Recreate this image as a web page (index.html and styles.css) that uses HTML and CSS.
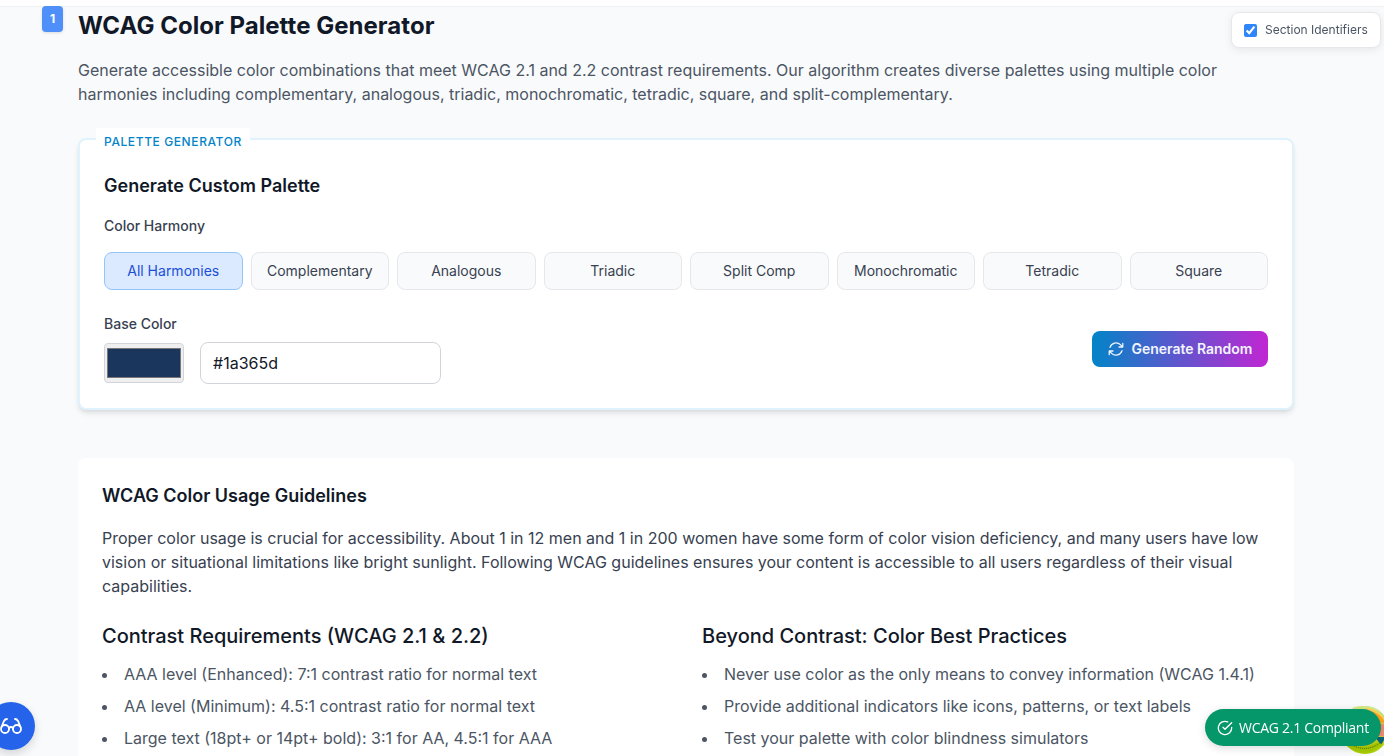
FILE: index.html
```html
<!DOCTYPE html>
<html lang="en">
<head>
<meta charset="utf-8">
<title>WCAG Color Palette Generator</title>
<link rel="stylesheet" href="styles.css">
</head>
<body>
<header class="topbar"></header>
<main class="page">
  <section class="intro">
    <span class="section-id">1</span>
    <h1 class="title">WCAG Color Palette Generator</h1>
    <p class="lead">Generate accessible color combinations that meet WCAG 2.1 and 2.2 contrast requirements. Our algorithm creates diverse palettes using multiple color harmonies including complementary, analogous, triadic, monochromatic, tetradic, square, and split-complementary.</p>
  </section>

  <section class="generator">
    <span class="generator-tag">PALETTE GENERATOR</span>
    <h2 class="heading">Generate Custom Palette</h2>
    <div class="label">Color Harmony</div>
    <div class="harmonies">
      <button class="harmony active">All Harmonies</button>
      <button class="harmony">Complementary</button>
      <button class="harmony">Analogous</button>
      <button class="harmony">Triadic</button>
      <button class="harmony">Split Comp</button>
      <button class="harmony">Monochromatic</button>
      <button class="harmony">Tetradic</button>
      <button class="harmony">Square</button>
    </div>
    <div class="base-row">
      <div>
        <div class="label base-label">Base Color</div>
        <div class="inputs">
          <input class="swatch" type="color" value="#1a365d">
          <input class="hex" type="text" value="#1a365d">
        </div>
      </div>
      <button class="random">
        <svg class="icon refresh" viewBox="0 0 24 24"><path d="M16.023 9.348h4.992V4.356M2.985 19.644v-4.992h4.992M2.985 14.652l3.181 3.183a8.25 8.25 0 0 0 13.803-3.7M4.031 9.865a8.25 8.25 0 0 1 13.803-3.7l3.181 3.182"/></svg>
        <span>Generate Random</span>
      </button>
    </div>
  </section>

  <section class="guidelines">
    <h2 class="heading">WCAG Color Usage Guidelines</h2>
    <p class="guide-text">Proper color usage is crucial for accessibility. About 1 in 12 men and 1 in 200 women have some form of color vision deficiency, and many users have low vision or situational limitations like bright sunlight. Following WCAG guidelines ensures your content is accessible to all users regardless of their visual capabilities.</p>
    <div class="columns">
      <div>
        <h3 class="subheading">Contrast Requirements (WCAG 2.1 &amp; 2.2)</h3>
        <ul class="list">
          <li>AAA level (Enhanced): 7:1 contrast ratio for normal text</li>
          <li>AA level (Minimum): 4.5:1 contrast ratio for normal text</li>
          <li>Large text (18pt+ or 14pt+ bold): 3:1 for AA, 4.5:1 for AAA</li>
        </ul>
      </div>
      <div>
        <h3 class="subheading">Beyond Contrast: Color Best Practices</h3>
        <ul class="list">
          <li>Never use color as the only means to convey information (WCAG 1.4.1)</li>
          <li>Provide additional indicators like icons, patterns, or text labels</li>
          <li>Test your palette with color blindness simulators</li>
        </ul>
      </div>
    </div>
  </section>
</main>

<label class="toggle"><input class="toggle-box" type="checkbox" checked><span>Section Identifiers</span></label>

<div class="vision">
  <svg class="glasses" viewBox="0 0 24 24"><circle cx="6" cy="15" r="4"/><circle cx="18" cy="15" r="4"/><path d="M14 15a2 2 0 0 0-4 0M2.500 13 5 7c.7-1.300 1.400-2 3-2M21.500 13 19 7c-.7-1.300-1.500-2-3-2"/></svg>
</div>

<svg class="wheel" viewBox="0 0 48 48">
  <defs>
    <linearGradient id="rim" x1="0" y1="0" x2="0" y2="1"><stop offset="0" stop-color="#a3e6a0"/><stop offset=".6" stop-color="#d9e021"/><stop offset="1" stop-color="#a8cf0a"/></linearGradient>
  </defs>
  <circle cx="24" cy="24" r="24" fill="url(#rim)"/>
  <path d="M12 1.500Q27-3 38 5L31 12Q22 4 10 6z" fill="#d7ea83"/>
  <path d="M25 2Q37 2 44 13L39 14Q33 5 23 5z" fill="#fbd45c"/>
  <path d="M30 5Q41 8 45 18L38 16Q34 9 27 8z" fill="#ffa51f"/>
  <path d="M37 17l10 2v12l-10-1z" fill="#f58b73"/>
  <path d="M34 31h11l-5 8z" fill="#08677c"/>
  <path d="M5 36Q23 46 37 36L42 39Q24 54 6 40z" fill="#a5cb00"/>
  <path d="M8 37Q24 48 39 37" fill="none" stroke="#536b00" stroke-dasharray="1 1"/>
</svg>
<div class="compliant">
  <svg class="icon" viewBox="0 0 24 24"><path d="M22 11.080V12a10 10 0 1 1-5.930-9.140M22 4 12 14.010l-3-3"/></svg>
  <span>WCAG 2.1 Compliant</span>
</div>
</body>
</html>
```
FILE: styles.css
```css
* { box-sizing: border-box; }
html, body { height: 100%; }
body {
  margin: 0;
  overflow: hidden;
  background: #f9fafc;
  color: #111827;
  font-family: Inter, "Liberation Sans", sans-serif;
  font-size: 16px;
  line-height: 24px;
}
h1, h2, h3, p, ul { margin: 0; padding: 0; }
button, input { font: inherit; }
.topbar { height: 7px; background: #fff; border-bottom: 1px solid #eff1f4; }
.page { width: 1216px; margin-left: 78px; padding-top: 3px; }
.intro { position: relative; margin-bottom: 32px; }
.section-id {
  position: absolute; left: -36px; top: -4px;
  width: 21px; height: 26px;
  border-radius: 4px;
  background: #4f8ff9; color: #fff;
  font-size: 12px; font-weight: 700; line-height: 26px; text-align: center;
  box-shadow: 0 1px 3px rgba(0, 0, 0, .12);
}
.title { font-size: 24px; line-height: 32px; font-weight: 700; letter-spacing: .03px; margin-bottom: 16px; }
.lead { color: #4b5563; }
.generator {
  position: relative;
  padding: 32px 24px 24px;
  border: 2px solid #e0f2fe; border-radius: 8px;
  background: #fff;
  box-shadow: 0 4px 6px -1px rgba(0, 0, 0, .1), 0 2px 4px -2px rgba(0, 0, 0, .1);
}
.generator-tag {
  position: absolute; left: 16px; top: -12px;
  padding: 4px 8px;
  background: #fff; color: #0284c7;
  font-size: 12px; line-height: 20px; font-weight: 500; letter-spacing: .6px;
}
.heading { font-size: 18px; line-height: 28px; font-weight: 600; margin-bottom: 16px; }
.label { font-size: 14px; line-height: 20px; font-weight: 500; color: #374151; margin-bottom: 16px; }
.harmonies { display: grid; grid-template-columns: repeat(8, 1fr); gap: 8px; margin-bottom: 24px; }
.harmony {
  padding: 8px 0;
  border: 1px solid #e5e7eb; border-radius: 8px;
  background: #f9fafb; color: #374151;
  font-size: 14px; line-height: 20px;
}
.harmony.active { background: #dbeafe; border-color: #93c5fd; color: #1d4ed8; }
.base-row { display: flex; justify-content: space-between; align-items: center; }
.base-label { margin-bottom: 8px; }
.inputs { display: flex; align-items: center; gap: 16px; }
.swatch { width: 80px; height: 40px; padding: 0; border: 1px solid #d1d5db; border-radius: 4px; background: #efefef; }
.hex {
  width: 241px; height: 42px; padding: 8px 12px;
  border: 1px solid #d1d5db; border-radius: 8px;
  background: #fff; color: #111827;
}
.random {
  display: flex; align-items: center; justify-content: center; gap: 8px;
  width: 176px; height: 36px; padding: 0;
  border: 0; border-radius: 8px;
  background: linear-gradient(to right, #0284c7, #c026d3);
  color: #f1f5ff; font-size: 14px; font-weight: 600; line-height: 20px; letter-spacing: -.03px;
}
.icon { width: 16px; height: 16px; flex: none; fill: none; stroke: currentColor; stroke-width: 2; stroke-linecap: round; stroke-linejoin: round; }
.refresh { width: 18px; height: 18px; margin: 0 -1px; stroke-width: 1.7; }
.guidelines { margin-top: 48px; padding: 24px; border-radius: 8px; background: #fff; }
.guide-text { color: #374151; margin-bottom: 24px; }
.columns { display: grid; grid-template-columns: 1fr 1fr; gap: 32px; }
.subheading { font-size: 20px; line-height: 28px; font-weight: 500; margin-bottom: 12px; }
.list { list-style: disc inside; color: #4b5563; }
.list li { margin-bottom: 8px; }
.toggle {
  position: fixed; left: 1231px; top: 12px;
  display: flex; align-items: center; gap: 8px;
  width: 150px; height: 36px; padding-left: 12px;
  border: 1px solid #e5e7eb; border-radius: 8px;
  background: #fff; color: #4b5563;
  font-size: 12px; line-height: 20px; white-space: nowrap;
  box-shadow: 0 2px 8px rgba(0, 0, 0, .08);
}
.toggle-box { width: 13px; height: 13px; margin: 0; accent-color: #2f86fb; }
.vision {
  position: fixed; left: -13px; top: 702px;
  display: flex; align-items: center; justify-content: center;
  width: 48px; height: 48px; border-radius: 50%;
  background: #2563eb; color: #fff;
  box-shadow: 0 4px 10px rgba(0, 0, 0, .15);
}
.glasses { width: 24px; height: 24px; fill: none; stroke: currentColor; stroke-width: 1.8; stroke-linecap: round; }
.wheel { position: fixed; left: 1341px; top: 706px; width: 48px; height: 48px; }
.compliant {
  position: fixed; left: 1205px; top: 709px;
  display: flex; align-items: center; gap: 6px;
  width: 176px; height: 37px; padding-left: 12px;
  border-radius: 19px;
  background: #059669; color: #fff;
  font-family: "Open Sans", "Noto Sans", sans-serif; font-size: 14px; font-weight: 500; letter-spacing: -.28px; white-space: nowrap;
  box-shadow: 0 2px 8px rgba(0, 0, 0, .15);
}
```
